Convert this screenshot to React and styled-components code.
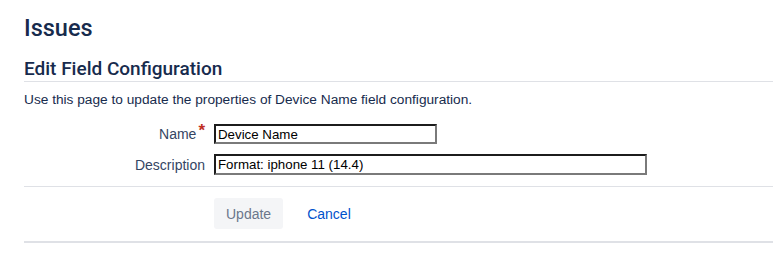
import * as React from 'react';
import styled, { createGlobalStyle } from 'styled-components';

const GlobalStyle = createGlobalStyle`
  html, body {
    margin: 0;
    padding: 0;
    background: #fff;
  }
  body {
    font-family: "Liberation Sans", Arial, sans-serif;
    color: #172b4d;
  }
`

const Page = styled.div`
  padding-left: 24px;
`
const Title = styled.h1`
  margin: 14px 0 0;
  font-family: Roboto, "Liberation Sans", sans-serif;
  font-size: 23.5px;
  line-height: 28px;
  font-weight: 500;
  color: #172b4d;
`
const SectionTitle = styled.h2`
  margin: 15px 0 0;
  font-family: Roboto, "Liberation Sans", sans-serif;
  font-size: 19px;
  line-height: 24px;
  font-weight: 500;
  color: #172b4d;
  border-bottom: 1px solid #dfe1e6;
`
const Intro = styled.p`
  margin: 8px 0 0;
  font-size: 13.7px;
  line-height: 20px;
  color: #172b4d;
`
const Form = styled.form`
  margin: 14px 0 0;
`
const Fields = styled.div`
  display: grid;
  grid-template-columns: 181px auto;
  column-gap: 9px;
  row-gap: 10px;
  align-items: center;
  justify-items: start;
  padding-bottom: 11px;
  border-bottom: 1px solid #dfe1e6;
`
const Label = styled.label`
  justify-self: end;
  font-size: 14px;
  line-height: 20px;
  color: #344563;
  white-space: nowrap;
`
const Required = styled.span`
  display: inline-block;
  margin-left: 2px;
  color: #bf2f24;
  font-size: 17px;
  font-weight: bold;
  line-height: 14px;
  vertical-align: top;
`
const TextInput = styled.input`
  box-sizing: border-box;
  width: ${props => props.width}px;
  height: ${props => props.height || 20}px;
  margin: 0;
  padding: 1px 2px;
  font-family: "Liberation Sans", Arial, sans-serif;
  font-size: 13.3px;
  color: #000;
  background: #fff;
  border-style: solid;
  border-width: 2px;
  border-color: #1c1c1c #7a7a7a #7a7a7a #1c1c1c;
  border-radius: 0;
  outline: none;
`
const Actions = styled.div`
  display: flex;
  align-items: center;
  gap: 12px;
  padding: 11px 0 12px 190px;
  border-bottom: 2px solid #dfe1e6;
`
const ActionButton = styled.button`
  height: 31px;
  padding: 0 12px;
  border: none;
  border-radius: 3px;
  font-family: inherit;
  font-size: 14px;
  background: ${props => props.link ? 'transparent' : '#f4f5f7'};
  color: ${props => props.link ? '#0052cc' : '#6b778c'};
  cursor: ${props => props.disabled ? 'not-allowed' : 'pointer'};
`

const App = () => {
  return (
    <Page>
      <GlobalStyle />
      <Title>Issues</Title>
      <SectionTitle>Edit Field Configuration</SectionTitle>
      <Intro>Use this page to update the properties of Device Name field configuration.</Intro>
      <Form onSubmit={e => e.preventDefault()}>
        <Fields>
          <Label htmlFor="name">Name<Required>*</Required></Label>
          <TextInput id="name" width={223} defaultValue="Device Name" />
          <Label htmlFor="description">Description</Label>
          <TextInput id="description" width={433} height={21} defaultValue="Format: iphone 11 (14.4)" />
        </Fields>
        <Actions>
          <ActionButton type="submit" disabled>Update</ActionButton>
          <ActionButton type="button" link>Cancel</ActionButton>
        </Actions>
      </Form>
    </Page>
  )
}

export default App
